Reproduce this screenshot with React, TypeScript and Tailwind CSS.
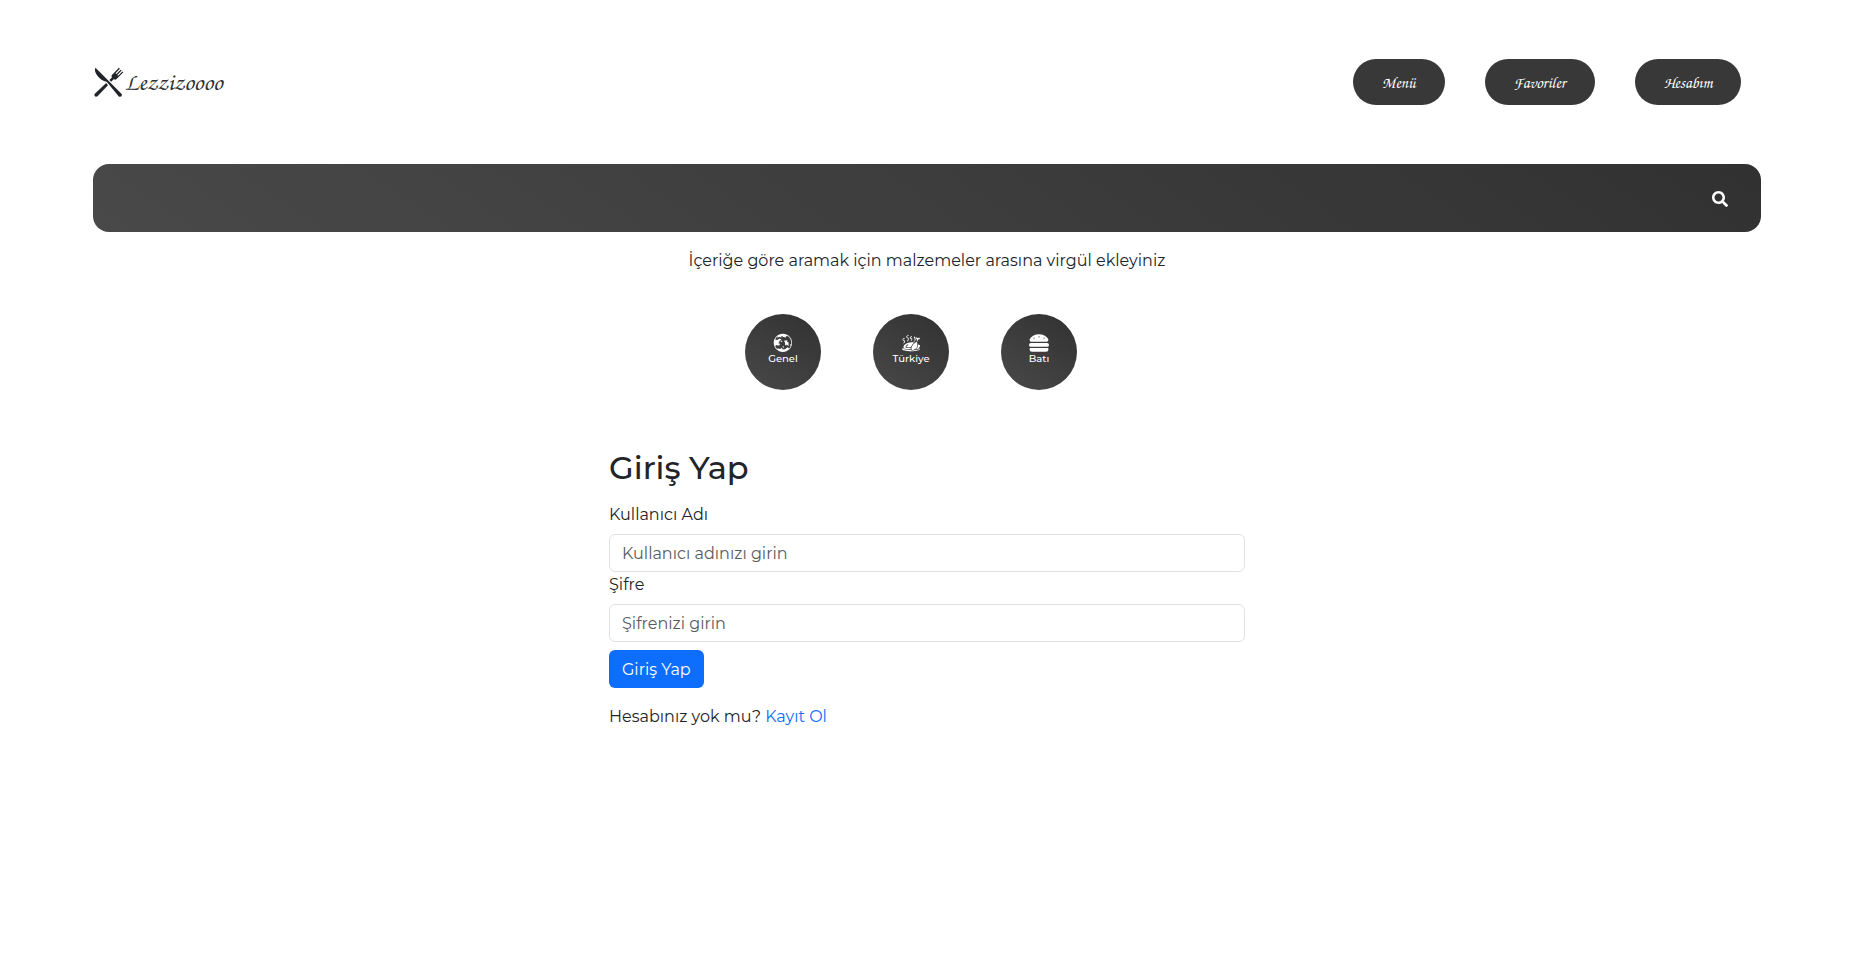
import type { ComponentType } from "react";
import { GiChickenOven, GiKnifeFork, GiWorld } from "react-icons/gi";
import { FaHamburger, FaSearch } from "react-icons/fa";

const script = "font-['TeX_Gyre_Chorus','Apple_Chancery','Liberation_Serif',cursive]";

const navLinks = ["Menü", "Favoriler", "Hesabım"];

const cuisines: { label: string; Icon: ComponentType<{ className?: string }> }[] = [
  { label: "Genel", Icon: GiWorld },
  { label: "Türkiye", Icon: GiChickenOven },
  { label: "Batı", Icon: FaHamburger },
];

function Header() {
  return (
    <header className="flex items-center justify-between pt-[59px] pr-5">
      <a href="#" className="flex items-center">
        <GiKnifeFork className="size-8" />
        <span className={`${script} pb-0.5 text-2xl leading-8 text-[#313131]`}>Lezzizoooo</span>
      </a>
      <nav className="flex gap-10">
        {navLinks.map((label) => (
          <a
            key={label}
            href="#"
            className={`${script} rounded-3xl bg-[#383838] px-[29px] pt-3 pb-2.5 text-center text-base text-white`}
          >
            {label}
          </a>
        ))}
      </nav>
    </header>
  );
}

function Search() {
  return (
    <form className="mt-[59px] flex flex-col items-center" onSubmit={(e) => e.preventDefault()}>
      <div className="flex w-full items-center rounded-2xl bg-[linear-gradient(35deg,#494949,#313131)] pr-[33px]">
        <input
          type="text"
          aria-label="Tarif ara"
          className="h-[68px] min-w-0 flex-1 rounded-2xl bg-transparent px-12 text-2xl text-white outline-none"
        />
        <button type="submit" aria-label="Ara" className="pt-0.5 text-white">
          <FaSearch className="size-4" />
        </button>
      </div>
      <p className="mt-[17px]">İçeriğe göre aramak için malzemeler arasına virgül ekleyiniz</p>
    </form>
  );
}

function Cuisines() {
  return (
    <ul className="mt-[41px] flex justify-center gap-[52px] pr-8">
      {cuisines.map(({ label, Icon }) => (
        <li key={label}>
          <a
            href="#"
            className="flex size-[76px] flex-col items-center justify-center rounded-full bg-[linear-gradient(35deg,#494949,#313131)] pb-1.5 text-white"
          >
            <Icon className="size-5" />
            <span className="text-[10px] leading-3 font-medium">{label}</span>
          </a>
        </li>
      ))}
    </ul>
  );
}

function Field({ id, label, type, placeholder }: { id: string; label: string; type: string; placeholder: string }) {
  return (
    <div className="mb-px">
      <label htmlFor={id} className="mb-[7px] block">
        {label}
      </label>
      <input
        id={id}
        type={type}
        placeholder={placeholder}
        className="block h-[38px] w-full rounded-md border border-[#dee2e6] bg-white px-3 placeholder:text-[#595c5f]"
      />
    </div>
  );
}

function Login() {
  return (
    <section className="mx-auto mt-[59px] w-full max-w-[636px]">
      <h2 className="mb-4 text-[32px] leading-[38px] font-medium">Giriş Yap</h2>
      <form onSubmit={(e) => e.preventDefault()}>
        <Field id="username" label="Kullanıcı Adı" type="text" placeholder="Kullanıcı adınızı girin" />
        <Field id="password" label="Şifre" type="password" placeholder="Şifrenizi girin" />
        <button type="submit" className="mt-2 block h-[38px] rounded-md bg-[#0d6efd] px-[13px] pt-0.5 text-white">
          Giriş Yap
        </button>
      </form>
      <p className="mt-[17px]">
        Hesabınız yok mu?{" "}
        <a href="#" className="text-[#0d6efd]">
          Kayıt Ol
        </a>
      </p>
    </section>
  );
}

export default function App() {
  return (
    <div className="min-h-screen bg-white px-[5%] font-['Montserrat','Open_Sans',sans-serif] text-base text-[#212529]">
      <Header />
      <main>
        <Search />
        <Cuisines />
        <Login />
      </main>
    </div>
  );
}
